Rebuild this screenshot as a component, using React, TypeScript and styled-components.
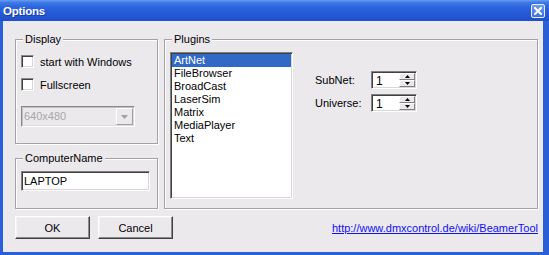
import styled, { createGlobalStyle } from 'styled-components';

const GlobalStyle = createGlobalStyle`
  html, body {
    margin: 0;
    padding: 0;
    background: #ffffff;
  }
  body {
    font-family: "Liberation Sans", Arial, sans-serif;
    font-size: 11px;
    color: #000;
  }
  * {
    box-sizing: border-box;
  }
`;

const DIALOG_BG = '#ece9ed';

const Window = styled.div`
  width: 549px;
  height: 255px;
  display: flex;
  flex-direction: column;
  overflow: hidden;
`;

const TitleBar = styled.div`
  height: 21px;
  display: flex;
  align-items: center;
  justify-content: space-between;
  padding: 0 4px 0 3px;
  background: linear-gradient(
    to bottom,
    #6a9cf0 0%,
    #3d7ae6 12%,
    #2b64dc 35%,
    #2559d6 65%,
    #1f50cc 100%
  );
`;

const TitleText = styled.span`
  font-family: "Liberation Sans", Arial, sans-serif;
  font-weight: 700;
  font-size: 11.5px;
  color: #ffffff;
  letter-spacing: -0.2px;
  text-shadow: 1px 1px 0 rgba(0, 0, 40, 0.35);
`;

const CloseButton = styled.div`
  width: 14px;
  height: 14px;
  border: 1px solid #e6eefc;
  border-radius: 2px;
  background: linear-gradient(to bottom, #6d9cf2, #3a72e2);
  display: flex;
  align-items: center;
  justify-content: center;
  margin-top: 1px;
`;

const Frame = styled.div`
  flex: 1;
  display: flex;
  padding: 0 6px 3px 3px;
  background: linear-gradient(to right, #2a5fd8, #2a5fd8);
`;

const Client = styled.div`
  flex: 1;
  background: ${DIALOG_BG};
  padding: 18px 0 0 12px;
  display: flex;
  flex-direction: column;
`;

const Body = styled.div`
  display: flex;
  gap: 6px;
`;

const LeftColumn = styled.div`
  width: 143px;
  display: flex;
  flex-direction: column;
  gap: 14px;
`;

const Group = styled.div<{ $height: number; $padTop: number }>`
  position: relative;
  height: ${({ $height }) => $height}px;
  border: 1px solid #a3a2a6;
  box-shadow: inset 1px 1px 0 #ffffff, 1px 1px 0 #ffffff;
  padding: ${({ $padTop }) => $padTop}px 0 0 5px;
`;

const GroupLabel = styled.span`
  position: absolute;
  top: -7px;
  left: 7px;
  padding: 0 2px;
  line-height: 13px;
  background: ${DIALOG_BG};
`;

const CheckRow = styled.div<{ $gapTop?: number }>`
  display: flex;
  align-items: center;
  gap: 6px;
  height: 13px;
  margin-top: ${({ $gapTop }) => $gapTop ?? 0}px;
`;

const CheckBox = styled.span`
  width: 13px;
  height: 13px;
  background: #ffffff;
  border-top: 1px solid #8a8a8a;
  border-left: 1px solid #8a8a8a;
  border-right: 1px solid #ffffff;
  border-bottom: 1px solid #ffffff;
  box-shadow: inset 1px 1px 0 #404040, inset -1px -1px 0 #d8d6d8;
`;

const Combo = styled.div`
  margin-top: 15px;
  width: 114px;
  height: 21px;
  display: flex;
  border-top: 1px solid #8a8a8a;
  border-left: 1px solid #8a8a8a;
  border-right: 1px solid #ffffff;
  border-bottom: 1px solid #ffffff;
  box-shadow: inset 1px 1px 0 #c0c0c0, inset -1px -1px 0 #dcdadc;
`;

const ComboText = styled.span`
  flex: 1;
  padding: 3px 0 0 2px;
  color: #a8a6aa;
`;

const ComboButton = styled.span`
  width: 17px;
  margin: 1px;
  display: flex;
  align-items: center;
  justify-content: center;
  border-top: 1px solid #ffffff;
  border-left: 1px solid #ffffff;
  border-right: 1px solid #a0a0a0;
  border-bottom: 1px solid #a0a0a0;
  background: ${DIALOG_BG};
`;

const TextBox = styled.input`
  display: block;
  width: 129px;
  height: 20px;
  padding: 0 0 0 2px;
  margin: 0;
  font-family: "Liberation Sans", Arial, sans-serif;
  font-size: 11px;
  color: #000;
  background: #ffffff;
  border-top: 1px solid #808080;
  border-left: 1px solid #808080;
  border-right: 1px solid #ffffff;
  border-bottom: 1px solid #ffffff;
  box-shadow: inset 1px 1px 0 #404040, inset -1px -1px 0 #d8d6d8;
  outline: none;
`;

const PluginsBody = styled.div`
  display: flex;
  align-items: flex-start;
`;

const ListBox = styled.div`
  width: 123px;
  height: 147px;
  background: #ffffff;
  border-top: 1px solid #808080;
  border-left: 1px solid #808080;
  border-right: 1px solid #ffffff;
  border-bottom: 1px solid #ffffff;
  box-shadow: inset 1px 1px 0 #404040, inset -1px -1px 0 #d8d6d8;
  padding: 1px;
  display: flex;
  flex-direction: column;
`;

const ListItem = styled.div<{ $selected: boolean }>`
  height: 13px;
  line-height: 13px;
  padding-left: 2px;
  background: ${({ $selected }) => ($selected ? '#316ac5' : 'transparent')};
  color: ${({ $selected }) => ($selected ? '#ffffff' : '#000000')};
`;

const Settings = styled.div`
  margin: 19px 0 0 22px;
  display: grid;
  grid-template-columns: 56px 46px;
  row-gap: 5px;
  align-items: center;
`;

const FieldLabel = styled.span`
  line-height: 13px;
`;

const Spinner = styled.div`
  width: 46px;
  height: 18px;
  display: flex;
  background: #ffffff;
  border-top: 1px solid #808080;
  border-left: 1px solid #808080;
  border-right: 1px solid #ffffff;
  border-bottom: 1px solid #ffffff;
  box-shadow: inset 1px 1px 0 #404040, inset -1px -1px 0 #d8d6d8;
  padding: 1px;
`;

const SpinValue = styled.span`
  flex: 1;
  font-size: 12px;
  padding: 1px 0 0 3px;
`;

const SpinButtons = styled.div`
  width: 16px;
  display: flex;
  flex-direction: column;
`;

const SpinButton = styled.span`
  flex: 1;
  display: flex;
  align-items: center;
  justify-content: center;
  background: ${DIALOG_BG};
  border-top: 1px solid #ffffff;
  border-left: 1px solid #ffffff;
  border-right: 1px solid #808080;
  border-bottom: 1px solid #808080;
`;

const ButtonRow = styled.div`
  margin-top: 7px;
  display: flex;
  align-items: center;
  gap: 8px;
  width: 523px;
`;

const PushButton = styled.div`
  width: 75px;
  height: 23px;
  display: flex;
  align-items: center;
  justify-content: center;
  background: ${DIALOG_BG};
  border-top: 1px solid #ffffff;
  border-left: 1px solid #ffffff;
  border-right: 1px solid #404040;
  border-bottom: 1px solid #404040;
  box-shadow: inset -1px -1px 0 #8c8c8c, inset 1px 1px 0 #f4f2f6;
`;

const Link = styled.a`
  margin-left: auto;
  color: #1010f0;
  text-decoration: underline;
`;

const Arrow = ({ up, size = 5, color = '#000' }: { up?: boolean; size?: number; color?: string }) => (
  <svg width={size} height={Math.ceil(size / 2)} viewBox={`0 0 ${size} ${Math.ceil(size / 2)}`}>
    {up ? (
      <polygon points={`0,${Math.ceil(size / 2)} ${size},${Math.ceil(size / 2)} ${size / 2},0`} fill={color} />
    ) : (
      <polygon points={`0,0 ${size},0 ${size / 2},${Math.ceil(size / 2)}`} fill={color} />
    )}
  </svg>
);

const plugins = ['ArtNet', 'FileBrowser', 'BroadCast', 'LaserSim', 'Matrix', 'MediaPlayer', 'Text'];

const App = () => {
  return (
    <>
      <GlobalStyle />
      <Window>
        <TitleBar>
          <TitleText>Options</TitleText>
          <CloseButton>
            <svg width="8" height="8" viewBox="0 0 8 8">
              <path d="M1 1 L7 7 M7 1 L1 7" stroke="#ffffff" strokeWidth="2" strokeLinecap="square" />
            </svg>
          </CloseButton>
        </TitleBar>
        <Frame>
          <Client>
            <Body>
              <LeftColumn>
                <Group $height={105} $padTop={15}>
                  <GroupLabel>Display</GroupLabel>
                  <CheckRow>
                    <CheckBox />
                    <span>start with Windows</span>
                  </CheckRow>
                  <CheckRow $gapTop={10}>
                    <CheckBox />
                    <span>Fullscreen</span>
                  </CheckRow>
                  <Combo>
                    <ComboText>640x480</ComboText>
                    <ComboButton>
                      <Arrow size={7} color="#a0a0a0" />
                    </ComboButton>
                  </Combo>
                </Group>
                <Group $height={51} $padTop={12}>
                  <GroupLabel>ComputerName</GroupLabel>
                  <TextBox defaultValue="LAPTOP" readOnly />
                </Group>
              </LeftColumn>
              <Group $height={170} $padTop={12} style={{ width: 374 }}>
                <GroupLabel>Plugins</GroupLabel>
                <PluginsBody>
                  <ListBox>
                    {plugins.map((name, i) => (
                      <ListItem key={name} $selected={i === 0}>
                        {name}
                      </ListItem>
                    ))}
                  </ListBox>
                  <Settings>
                    <FieldLabel>SubNet:</FieldLabel>
                    <Spinner>
                      <SpinValue>1</SpinValue>
                      <SpinButtons>
                        <SpinButton>
                          <Arrow up size={5} />
                        </SpinButton>
                        <SpinButton>
                          <Arrow size={5} />
                        </SpinButton>
                      </SpinButtons>
                    </Spinner>
                    <FieldLabel>Universe:</FieldLabel>
                    <Spinner>
                      <SpinValue>1</SpinValue>
                      <SpinButtons>
                        <SpinButton>
                          <Arrow up size={5} />
                        </SpinButton>
                        <SpinButton>
                          <Arrow size={5} />
                        </SpinButton>
                      </SpinButtons>
                    </Spinner>
                  </Settings>
                </PluginsBody>
              </Group>
            </Body>
            <ButtonRow>
              <PushButton>OK</PushButton>
              <PushButton>Cancel</PushButton>
              <Link href="#">http://www.dmxcontrol.de/wiki/BeamerTool</Link>
            </ButtonRow>
          </Client>
        </Frame>
      </Window>
    </>
  );
};

export default App;
